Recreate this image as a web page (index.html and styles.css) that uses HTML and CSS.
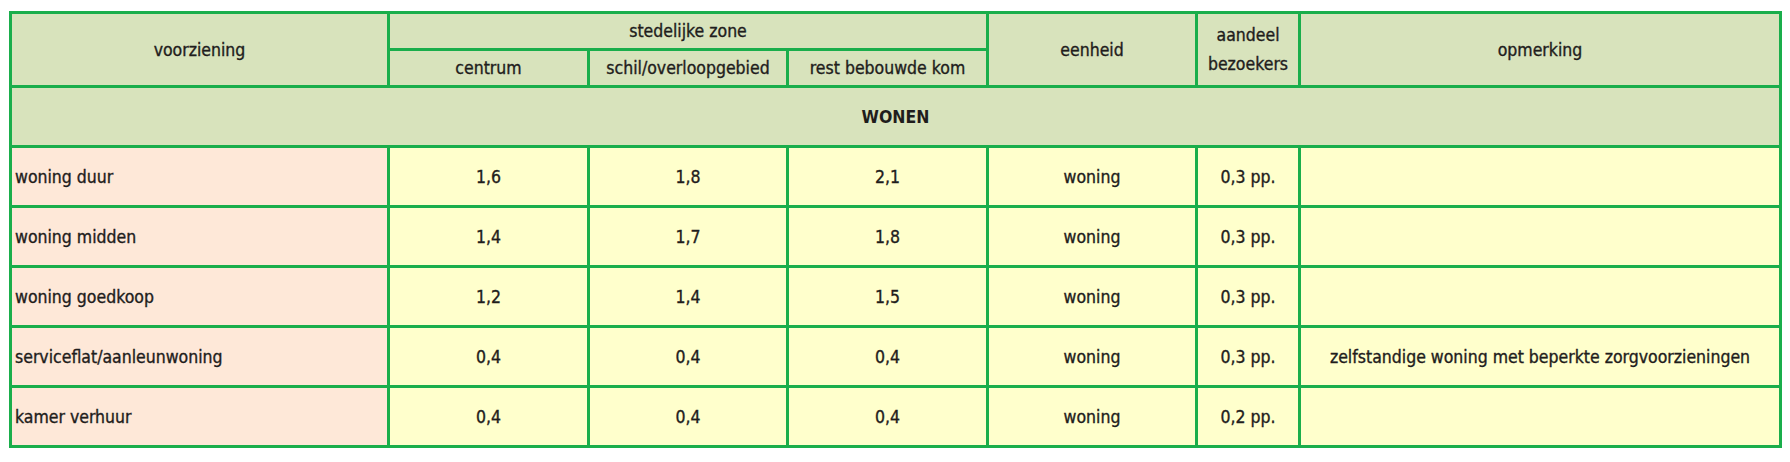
FILE: index.html
```html
<!DOCTYPE html>
<html lang="nl">
<head>
<meta charset="utf-8">
<title>Parkeernormen wonen</title>
<link rel="stylesheet" href="styles.css">
</head>
<body>
<div class="page">
<table class="norms">
  <colgroup>
    <col class="c-name">
    <col class="c-num">
    <col class="c-num2">
    <col class="c-num">
    <col class="c-unit">
    <col class="c-share">
    <col class="c-note">
  </colgroup>
  <thead>
    <tr class="h1">
      <th rowspan="2">voorziening</th>
      <th colspan="3">stedelijke zone</th>
      <th rowspan="2">eenheid</th>
      <th rowspan="2" class="two">aandeel<br>bezoekers</th>
      <th rowspan="2">opmerking</th>
    </tr>
    <tr class="h2">
      <th>centrum</th>
      <th>schil/overloopgebied</th>
      <th>rest bebouwde kom</th>
    </tr>
  </thead>
  <tbody>
    <tr class="section"><th colspan="7">WONEN</th></tr>
    <tr>
      <td class="name">woning duur</td><td>1,6</td><td>1,8</td><td>2,1</td><td>woning</td><td>0,3 pp.</td><td></td>
    </tr>
    <tr>
      <td class="name">woning midden</td><td>1,4</td><td>1,7</td><td>1,8</td><td>woning</td><td>0,3 pp.</td><td></td>
    </tr>
    <tr>
      <td class="name">woning goedkoop</td><td>1,2</td><td>1,4</td><td>1,5</td><td>woning</td><td>0,3 pp.</td><td></td>
    </tr>
    <tr>
      <td class="name">serviceflat/aanleunwoning</td><td>0,4</td><td>0,4</td><td>0,4</td><td>woning</td><td>0,3 pp.</td><td>zelfstandige woning met beperkte zorgvoorzieningen</td>
    </tr>
    <tr>
      <td class="name">kamer verhuur</td><td>0,4</td><td>0,4</td><td>0,4</td><td>woning</td><td>0,2 pp.</td><td></td>
    </tr>
  </tbody>
</table>
</div>
</body>
</html>
```

FILE: styles.css
```css
html, body {
  margin: 0;
  padding: 0;
  background: #ffffff;
}

.page {
  padding: 11px 0 0 9px;
}

.norms {
  border-collapse: collapse;
  table-layout: fixed;
  width: 1773px;
  font-family: "DejaVu Sans Condensed", "Liberation Sans Narrow", "Liberation Sans", sans-serif;
  font-size: 17.5px;
  color: #1f1d1c;
  -webkit-text-stroke: 0.35px #1f1d1c;
}

.c-name { width: 378px; }
.c-num { width: 200px; }
.c-num2 { width: 199px; }
.c-unit { width: 209px; }
.c-share { width: 103px; }
.c-note { width: 481px; }

.norms th,
.norms td {
  border: 3px solid #1aae4b;
  padding: 0 4px;
  text-align: center;
  vertical-align: middle;
  font-weight: normal;
  line-height: 22px;
  white-space: nowrap;
}

.norms thead th {
  background: #d8e3bc;
}

.norms thead th.two {
  line-height: 29px;
}

.norms .h1 { height: 37px; }
.norms .h2 { height: 37px; }

.norms .section { height: 60px; }

.norms .section th {
  background: #d8e3bc;
  font-weight: bold;
  -webkit-text-stroke: 0;
}

.norms tbody tr { height: 60px; }

.norms td {
  background: #ffffcc;
}

.norms td.name {
  background: #fee8d8;
  text-align: left;
  padding-left: 3px;
}
```
